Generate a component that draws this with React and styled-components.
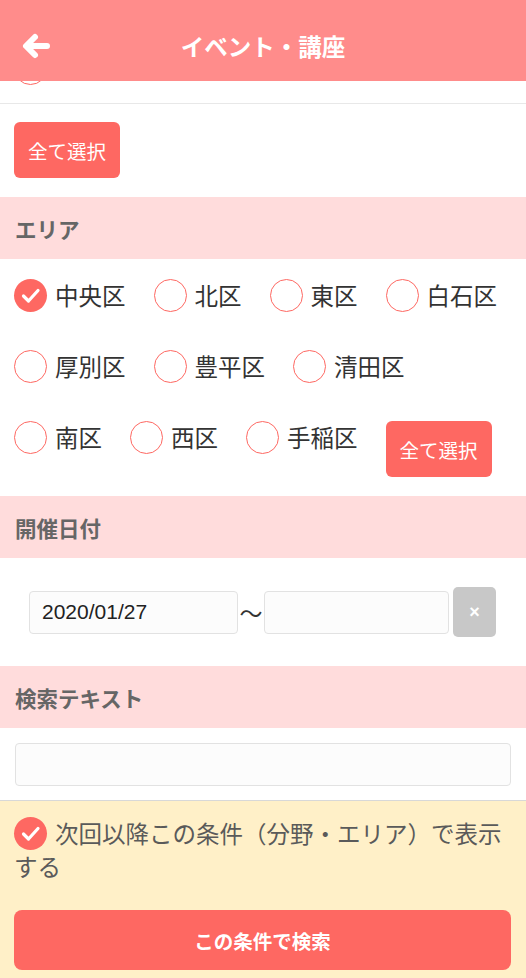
import React from "react";
import styled, { createGlobalStyle } from "styled-components";

const RED = "#fe6862";

const GlobalStyle = createGlobalStyle`
  html, body {
    margin: 0;
    padding: 0;
    background: #fff;
  }
  body {
    font-family: "Noto Sans CJK JP", "Noto Sans", sans-serif;
    color: #333;
  }
  * {
    box-sizing: border-box;
  }
`;

const areaRows = [
  [
    { name: "中央区", checked: true },
    { name: "北区" },
    { name: "東区" },
    { name: "白石区" },
  ],
  [{ name: "厚別区" }, { name: "豊平区" }, { name: "清田区" }],
  [{ name: "南区" }, { name: "西区" }, { name: "手稲区" }],
];

const Radio = ({ checked }) => (
  <Circle checked={checked}>
    {checked && (
      <svg width="33" height="33" viewBox="0 0 33 33">
        <polyline
          points="9.5,17 14.5,22 24,11.5"
          fill="none"
          stroke="#fff"
          strokeWidth="3.2"
          strokeLinecap="round"
          strokeLinejoin="round"
        />
      </svg>
    )}
  </Circle>
);

const App = () => {
  return (
    <Page>
      <GlobalStyle />
      <Header>
        <BackButton>
          <svg width="30" height="28" viewBox="0 0 30 28">
            <path
              d="M26 14 H6 M14 5 L5 14 L14 23"
              fill="none"
              stroke="#fff"
              strokeWidth="6"
              strokeLinecap="round"
              strokeLinejoin="round"
            />
          </svg>
        </BackButton>
        <Title>イベント・講座</Title>
      </Header>

      <PrevRow>
        <Radio />
      </PrevRow>

      <SelectAllWrap>
        <SelectButton>全て選択</SelectButton>
      </SelectAllWrap>

      <SectionTitle>エリア</SectionTitle>
      <AreaList>
        {areaRows.map((row, i) => (
          <AreaRow key={i}>
            {row.map((area) => (
              <AreaItem key={area.name}>
                <Radio checked={area.checked} />
                <AreaName>{area.name}</AreaName>
              </AreaItem>
            ))}
            {i === areaRows.length - 1 && (
              <SelectButton inline>全て選択</SelectButton>
            )}
          </AreaRow>
        ))}
      </AreaList>

      <SectionTitle>開催日付</SectionTitle>
      <DateRow>
        <DateInput width={209} defaultValue="2020/01/27" />
        <Tilde>〜</Tilde>
        <DateInput width={185} defaultValue="" />
        <ClearButton>×</ClearButton>
      </DateRow>

      <SectionTitle>検索テキスト</SectionTitle>
      <TextWrap>
        <TextInput />
      </TextWrap>

      <Footer>
        <KeepLabel>
          <Radio checked />
          次回以降この条件（分野・エリア）で表示する
        </KeepLabel>
        <SearchButton>この条件で検索</SearchButton>
      </Footer>
    </Page>
  );
};

export default App;

const Page = styled.div`
  width: 526px;
  min-height: 978px;
  background: #fff;
  display: flex;
  flex-direction: column;
`;

const Header = styled.header`
  position: fixed;
  top: 0;
  left: 0;
  right: 0;
  height: 81px;
  background: #ff8c8b;
  display: flex;
  align-items: center;
  justify-content: center;
  padding-top: 10px;
  z-index: 10;
`;

const BackButton = styled.div`
  position: absolute;
  left: 21px;
  top: 32px;
  width: 30px;
  height: 28px;
  display: flex;
`;

const Title = styled.h1`
  margin: 0;
  color: #fff;
  font-size: 23.5px;
  font-weight: 700;
  letter-spacing: 0;
`;

const PrevRow = styled.div`
  height: 104px;
  display: flex;
  align-items: flex-end;
  padding: 0 0 18px 14px;
  border-bottom: 1px solid #e8e8e8;
`;

const SelectAllWrap = styled.div`
  padding: 18px 14px 19px;
`;

const SelectButton = styled.button`
  height: 56px;
  padding: 0 14px;
  border: none;
  border-radius: 6px;
  background: ${RED};
  color: #fff;
  font-family: inherit;
  font-size: 19.5px;
  font-weight: 400;
  cursor: pointer;
  ${(p) => p.inline && "margin-top: 19px;"}
`;

const SectionTitle = styled.div`
  height: 62px;
  background: #ffdcdc;
  display: flex;
  align-items: center;
  padding: 0 15px;
  font-size: 21.5px;
  font-weight: 700;
  color: #666;
`;

const AreaList = styled.div`
  padding: 1px 0 19px 14px;
  display: flex;
  flex-direction: column;
`;

const AreaRow = styled.div`
  display: flex;
  align-items: flex-start;
  gap: 28px;
`;

const AreaItem = styled.label`
  height: 71px;
  display: flex;
  align-items: center;
  gap: 8px;
`;

const Circle = styled.span`
  display: inline-flex;
  flex: none;
  width: 33px;
  height: 33px;
  border-radius: 50%;
  border: ${(p) => (p.checked ? "none" : `1.8px solid ${RED}`)};
  background: ${(p) => (p.checked ? RED : "#fff")};
  vertical-align: middle;
`;

const AreaName = styled.span`
  font-size: 23.5px;
  color: #333;
  line-height: 1;
`;

const DateRow = styled.div`
  height: 108px;
  display: flex;
  align-items: center;
  padding: 0 30px 0 29px;
`;

const DateInput = styled.input`
  width: ${(p) => p.width}px;
  height: 43px;
  border: 1px solid #e2e2e2;
  border-radius: 4px;
  background: #fcfcfc;
  padding: 0 12px;
  font-family: "Liberation Sans", Arial, sans-serif;
  font-size: 21px;
  color: #222;
  outline: none;
`;

const Tilde = styled.span`
  width: 26px;
  text-align: center;
  font-size: 23px;
  color: #333;
`;

const ClearButton = styled.button`
  margin-left: 4px;
  width: 43px;
  height: 50px;
  border: none;
  border-radius: 5px;
  background: #c8c8c8;
  color: #fff;
  font-family: "Liberation Sans", Arial, sans-serif;
  font-size: 18px;
  font-weight: 700;
`;

const TextWrap = styled.div`
  padding: 15px 15px 14px;
`;

const TextInput = styled.input`
  display: block;
  width: 100%;
  height: 43px;
  border: 1px solid #e2e2e2;
  border-radius: 4px;
  background: #fcfcfc;
  outline: none;
`;

const Footer = styled.footer`
  flex: 1;
  background: #fff0c8;
  border-top: 1px solid #d8d8d8;
  padding: 16px 15px 8px 14px;
`;

const KeepLabel = styled.label`
  display: block;
  font-size: 23.5px;
  line-height: 33px;
  color: #5a5a5a;

  ${Circle} {
    margin-right: 8px;
    vertical-align: top;
  }
`;

const SearchButton = styled.button`
  display: block;
  width: 100%;
  height: 60px;
  margin-top: 27px;
  border: none;
  border-radius: 8px;
  background: ${RED};
  color: #fff;
  font-family: inherit;
  font-size: 19.5px;
  font-weight: 700;
`;
